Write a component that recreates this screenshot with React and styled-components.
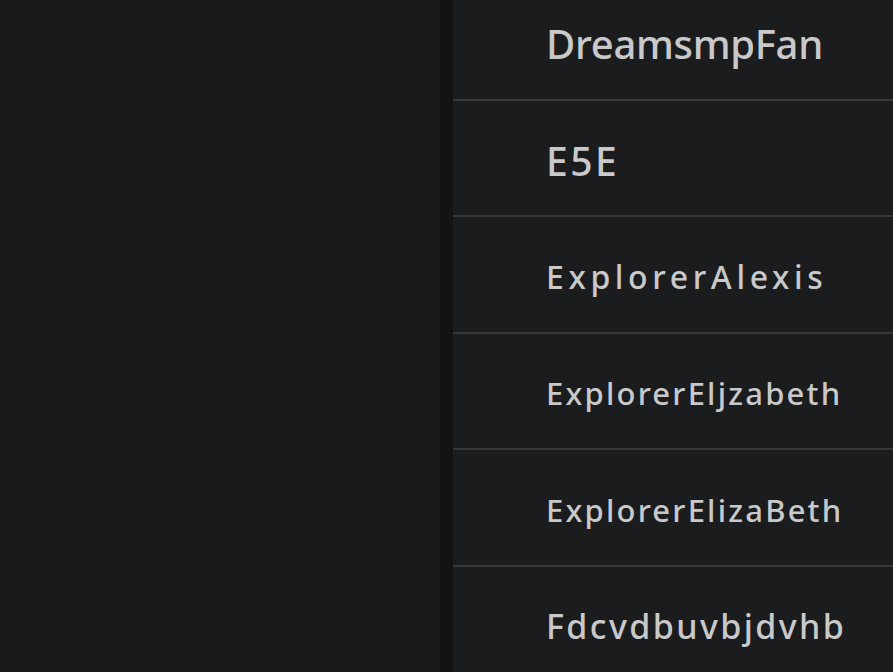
import React from 'react';
import styled, { createGlobalStyle } from 'styled-components';

const GlobalStyle = createGlobalStyle`
    html, body {
        margin: 0;
        padding: 0;
        background: #181818;
        overflow: hidden;
    }
`;

const Page = styled.div`
    display: flex;
    width: 893px;
    height: 672px;
    background: #181818;
    overflow: hidden;
`;

const Backdrop = styled.div`
    flex: 1;
`;

const Edge = styled.div`
    width: 13px;
    background: #131314;
`;

const Panel = styled.div`
    width: 440px;
    background: #1b1c1e;
    display: flex;
    flex-direction: column;
    margin-top: -16px;
`;

const Row = styled.div`
    box-sizing: border-box;
    height: 116.5px;
    flex-shrink: 0;
    display: flex;
    align-items: center;
    padding: 5px 0 0 93px;
    border-bottom: 2px solid #36373a;
`;

const Name = styled.span`
    font-family: 'Noto Sans', sans-serif;
    font-weight: 500;
    font-size: ${props => props.size}px;
    letter-spacing: ${props => props.spacing}px;
    color: #c9c9ca;
    white-space: nowrap;
`;

const players = [
    { name: 'DreamsmpFan', size: 40, spacing: -0.3 },
    { name: 'E5E', size: 39, spacing: 2.5 },
    { name: 'ExplorerAlexis', size: 32, spacing: 4.6 },
    { name: 'ExplorerEljzabeth', size: 31, spacing: 2.2 },
    { name: 'ExplorerElizaBeth', size: 31, spacing: 2.2 },
    { name: 'Fdcvdbuvbjdvhb', size: 34, spacing: 2.4 },
];

const App = () => {
    return (
        <Page>
            <GlobalStyle />
            <Backdrop />
            <Edge />
            <Panel>
                {players.map(p => (
                    <Row key={p.name}>
                        <Name size={p.size} spacing={p.spacing}>{p.name}</Name>
                    </Row>
                ))}
            </Panel>
        </Page>
    );
}

export default App;
